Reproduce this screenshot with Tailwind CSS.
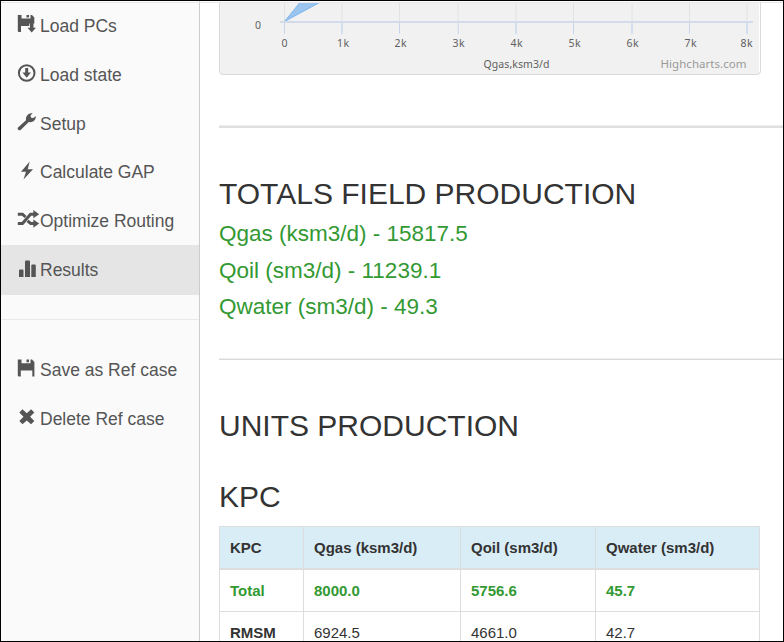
<!DOCTYPE html>
<html lang="en">
<head>
<meta charset="utf-8">
<title>Field production results</title>
<script src="https://cdn.jsdelivr.net/npm/@tailwindcss/browser@4"></script>
</head>
<body class="h-[642px] w-[784px] overflow-hidden bg-white font-['Liberation_Sans',Arial,sans-serif] text-[#333]">
<div class="flex h-[642px] w-[784px] overflow-hidden border border-black">
  <aside class="h-full w-[199px] shrink-0 border-r border-[#ccc] bg-[#fafafa] text-[17.5px] text-[#555]">
    <div class="h-px bg-white"></div>
    <div class="h-px w-[199px] bg-[#ebe6eb]"></div>
    <nav class="-mt-px">
      <a class="flex h-[48.7px] items-center pl-4"><svg class="relative -top-0.5 mr-[1px] h-[20px] w-[22px] shrink-0 overflow-visible" viewBox="0 0 22 20" fill="currentColor"><path d="M.8 1H4.500V4.500H13.500V1H15L17.300 3.500V9.500H12.300V12H4V18H1.500L.8 17.300zM9.500 1H12V3.500H9.500zM13 9.500H16.500V13.800H19L14.700 18.500 10.500 13.800H13z"/></svg>Load PCs</a>
      <a class="flex h-[48.7px] items-center pl-4"><svg class="relative -top-0.5 mr-[1px] h-[20px] w-[22px] shrink-0" viewBox="0 0 22 20" fill="currentColor"><circle cx="9.700" cy="10" r="7.800" fill="none" stroke="currentColor" stroke-width="2"/><path d="M8.200 5h3v4.500h2.800l-4.300 5.300-4.300-5.300h2.800z"/></svg>Load state</a>
      <a class="flex h-[48.7px] items-center pl-4"><svg class="relative -top-0.5 mr-[1px] h-[20px] w-[22px] shrink-0" viewBox="0 0 22 20" fill="currentColor"><path d="M1 15.600 9 8.300C8.400 4.400 11.300 1 15.800 1L13.500 3.500l.6 2.200 2.400.4 2.200-2C19.300 7.800 15.700 10.700 11.800 10.100L3.900 17.800C2.600 19.300-.3 17.200 1 15.600z"/></svg>Setup</a>
      <a class="flex h-[48.7px] items-center pl-4"><svg class="relative -top-0.5 mr-[1px] h-[20px] w-[22px] shrink-0 overflow-visible" viewBox="0 0 22 20" fill="currentColor"><path d="M12.700 1.500 4 11.800h5L6.500 19.500 16 9.300h-5.300z"/></svg>Calculate GAP</a>
      <a class="flex h-[48.7px] items-center pl-4"><svg class="relative -top-0.5 mr-[1px] h-[20px] w-[22px] shrink-0 overflow-visible" viewBox="0 0 22 20" fill="currentColor"><g fill="none" stroke="currentColor" stroke-width="3"><path d="M.8 5.200h4.700l3 2.800M.8 14.500h4.700L13.500 5.200H17.500M10.500 11.800l3.200 2.700H17.500"/></g><path d="M16.300 1 22.200 5.200 16.300 9.300zM16.300 10.500 22.200 14.500 16.300 18.700z"/></svg>Optimize Routing</a>
      <a class="flex h-[50px] items-center bg-[#e5e5e5] pb-px pl-4"><svg class="relative -top-0.5 mr-[1px] h-[20px] w-[22px] shrink-0" viewBox="0 0 22 20" fill="currentColor"><path d="M2 12.500q0-1 1-1h2.500q1 0 1 1V19H2zM8 3.500q0-1 1-1h3q1 0 1 1V19H8zM14.300 7.500q0-1 1-1h2.500q1 0 1 1V19h-4.500z"/></svg>Results</a>
      <div class="mt-6 mb-[25px] h-px bg-[#e9e9e9]"></div>
      <a class="flex h-[49px] items-center pl-4"><svg class="relative -top-0.5 mr-[1px] h-[20px] w-[22px] shrink-0" viewBox="0 0 22 20" fill="currentColor"><path d="M.8 1.500H4.500V5.200H13.500V1.500H15L17.400 4V18.500H15.300V12.500H3.800V18.500H1.500L.8 17.800zM9.500 1.500H12V4.200H9.500z"/></svg>Save as Ref case</a>
      <a class="flex h-[49px] items-center pl-4"><svg class="relative -top-0.5 mr-[1px] h-[20px] w-[22px] shrink-0" viewBox="0 0 22 20" fill="currentColor"><path d="M2.300 5.500 5.500 2.300 9.800 6.200 14.100 2.300 17.300 5.500 13.100 9.800 17.300 14.100 14.100 17.300 9.800 13.400 5.500 17.300 2.300 14.100 6.500 9.800z"/></svg>Delete Ref case</a>
    </nav>
  </aside>
  <main class="min-w-0 flex-1">
    <div class="h-px"></div>
    <div class="h-px bg-[#ebe6eb]"></div>
    <div class="pl-[19px]">
      <svg class="block" width="545" height="73" viewBox="219 3 545 73" font-family="'Noto Sans','Open Sans',sans-serif">
        <path d="M219.500 0V71q0 3.500 3.500 3.500H757q3.500 0 3.500-3.500V0z" fill="#f1f1f1" stroke="#d9d9d9"/>
        <path d="M759.500 0V72" stroke="#fff"/>
        <g stroke="#e2e2e5"><path d="M284.500 0V21M342 0V21M399.500 0V21M458 0V21M516 0V21M573.500 0V21M632 0V21M689.500 0V21M747 0V21"/></g>
        <path d="M284.500 21.500 300 2.500H319.500z" fill="#9bc5ee"/>
        <path d="M300 2.500 284.500 21.500 319.500 2.500" fill="none" stroke="#7cb5ec"/>
        <g stroke="#c8d5eb"><path d="M284.500 22V34M399.500 22V34M458.200 22V34M573.500 22V34M689.500 22V34"/><path d="M342 22V34M516 22V34M632 22V34M747 22V34" stroke="#d3deef" stroke-width="2"/><path d="M280 22H753" stroke="#d3daea" stroke-width="2"/></g>
        <g font-size="10.500" fill="#606060" text-anchor="middle">
          <text x="258" y="29">0</text>
          <text x="284.500" y="47">0</text>
          <text x="343" y="47" textLength="12">1k</text>
          <text x="400.500" y="47" textLength="12">2k</text>
          <text x="458.500" y="47" textLength="12">3k</text>
          <text x="516.500" y="47" textLength="12">4k</text>
          <text x="574.500" y="47" textLength="12">5k</text>
          <text x="632.500" y="47" textLength="12">6k</text>
          <text x="690.500" y="47" textLength="12">7k</text>
          <text x="746.500" y="47" textLength="12">8k</text>
          <text x="516.500" y="68" textLength="66">Qgas,ksm3/d</text>
        </g>
        <text x="660.500" y="68" font-size="11.500" fill="#999" textLength="86">Highcharts.com</text>
      </svg>
      <div class="mt-[49px] h-[3px] border-t border-[#eee] bg-[#dfdfdf]"></div>
      <h1 class="mt-[48px] h-[36px] text-[30px] leading-[36px]">TOTALS FIELD PRODUCTION</h1>
      <div class="mt-[4px] text-[22.5px] leading-[36.600px] text-[#339933]">
        <p>Qgas (ksm3/d) - 15817.5</p>
        <p>Qoil (sm3/d) - 11239.1</p>
        <p>Qwater (sm3/d) - 49.3</p>
      </div>
      <div class="mt-[32.200px] h-[2px] border-t border-[#eee] bg-[#dadada]"></div>
      <h1 class="mt-[48px] h-[36px] text-[30px] leading-[36px]">UNITS PRODUCTION</h1>
      <h1 class="mt-[35px] h-[36px] text-[30px] leading-[36px]">KPC</h1>
      <div class="mt-[11px] grid w-[541px] grid-cols-[84px_157px_135px_164px] border-t border-l border-[#ddd] text-[15px] *:border-r *:border-[#ddd] *:pl-[10px]">
        <div class="h-[43px] border-b-2 bg-[#d9edf7] leading-[42px] font-bold">KPC</div>
        <div class="h-[43px] border-b-2 bg-[#d9edf7] leading-[42px] font-bold">Qgas (ksm3/d)</div>
        <div class="h-[43px] border-b-2 bg-[#d9edf7] leading-[42px] font-bold">Qoil (sm3/d)</div>
        <div class="h-[43px] border-b-2 bg-[#d9edf7] leading-[42px] font-bold">Qwater (sm3/d)</div>
        <div class="h-[42px] border-b leading-[42px] font-bold text-[#339933]">Total</div>
        <div class="h-[42px] border-b leading-[42px] font-bold text-[#339933]">8000.0</div>
        <div class="h-[42px] border-b leading-[42px] font-bold text-[#339933]">5756.6</div>
        <div class="h-[42px] border-b leading-[42px] font-bold text-[#339933]">45.7</div>
        <div class="h-[43px] leading-[42px] font-bold">RMSM</div>
        <div class="h-[43px] leading-[42px]">6924.5</div>
        <div class="h-[43px] leading-[42px]">4661.0</div>
        <div class="h-[43px] leading-[42px]">42.7</div>
      </div>
    </div>
  </main>
</div>
</body>
</html>
